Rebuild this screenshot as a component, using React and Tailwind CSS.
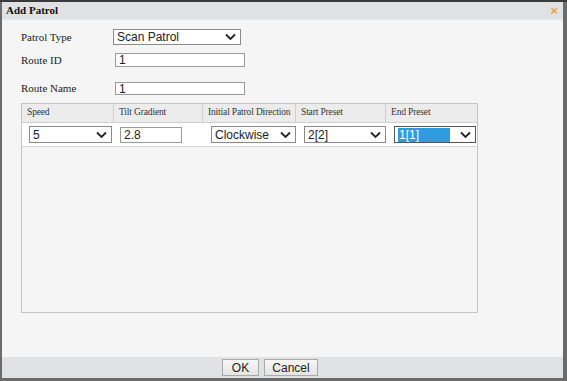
function Chevron() {
  return (
    <svg width="11" height="8" viewBox="0 0 11 8" className="shrink-0">
      <path d="M1 1.5 L5.5 6 L10 1.5" fill="none" stroke="#222" strokeWidth="1.8" />
    </svg>
  );
}

function Select({ value, className = '', selected = false }) {
  return (
    <div className={`flex items-center bg-white border border-[#8a8a8a] pl-[3px] pr-[4px] ${className}`}>
      <span
        className={`flex-1 text-[12px] leading-[14px] font-['Liberation_Sans',Arial,sans-serif] ${
          selected ? 'bg-[#2f9be0] text-white pl-[1px] mr-[10px]' : 'text-[#222]'
        }`}
      >
        {value}
      </span>
      <Chevron />
    </div>
  );
}

function TextBox({ value, className = '' }) {
  return (
    <div className={`flex items-center bg-white border border-[#9a9a9a] pl-[3px] text-[12px] leading-[12px] text-[#222] font-['Liberation_Sans',Arial,sans-serif] ${className}`}>
      {value}
    </div>
  );
}

export default function App() {
  const headers = ['Speed', 'Tilt Gradient', 'Initial Patrol Direction', 'Start Preset', 'End Preset'];

  return (
    <div className="w-[567px] h-[381px] bg-[#6b6b6b] flex flex-col overflow-hidden font-['Liberation_Serif','Times_New_Roman',serif]">
      <div className="h-[2px] bg-[#3a3a3a]" />
      <div className="flex-1 flex flex-col ml-[2px] mr-[4px] mb-[3px] bg-[#f5f5f5]">
        {/* title bar */}
        <div className="h-[18px] flex items-center justify-between bg-[#dfe1e3] pl-[4px] pr-[5px] border-b border-[#e8eaec]">
          <span className="text-[11px] leading-none font-bold text-[#111]">Add Patrol</span>
          <span className="text-[13px] font-bold leading-none text-[#e0a93a] font-['Liberation_Sans',Arial,sans-serif]">×</span>
        </div>

        {/* form */}
        <div className="pl-[19px] pt-[9px]">
          <div className="flex items-center h-[16px]">
            <span className="w-[92px] text-[11px] text-[#222]">Patrol Type</span>
            <Select value="Scan Patrol" className="w-[128px] h-[16px]" />
          </div>
          <div className="flex items-center h-[14px] mt-[8px]">
            <span className="w-[94px] text-[11px] text-[#222]">Route ID</span>
            <TextBox value="1" className="w-[130px] h-[14px]" />
          </div>
          <div className="flex items-center h-[13px] mt-[15px]">
            <span className="w-[94px] text-[11px] text-[#222]">Route Name</span>
            <TextBox value="1" className="w-[130px] h-[13px]" />
          </div>

          {/* table */}
          <div className="mt-[8px] w-[457px] h-[210px] border border-[#c4c4c4] bg-[#f5f5f5]">
            <div className="grid grid-cols-[92px_89px_93px_90px_1fr] h-[19px] bg-[#ececec] border-b border-[#cfcfcf]">
              {headers.map((h, i) => (
                <div
                  key={h}
                  className={`flex items-center pl-[5px] text-[9.5px] tracking-[-0.15px] leading-none whitespace-nowrap overflow-hidden text-[#333] ${i < 4 ? 'border-r border-[#cfcfcf]' : ''}`}
                >
                  {h}
                </div>
              ))}
            </div>
            <div className="grid grid-cols-[92px_89px_93px_90px_1fr] h-[24px] bg-white border-b border-[#d6d6d6] items-center">
              <div className="pl-[7px]"><Select value="5" className="w-[83px] h-[17px]" /></div>
              <div className="pl-[6px]"><TextBox value="2.8" className="w-[62px] h-[16px]" /></div>
              <div className="pl-[8px]"><Select value="Clockwise" className="w-[85px] h-[17px]" /></div>
              <div className="pl-[8px]"><Select value="2[2]" className="w-[82px] h-[17px]" /></div>
              <div className="pl-[8px]"><Select value="1[1]" selected className="w-[82px] h-[17px] border-[#555]" /></div>
            </div>
          </div>
        </div>

        <div className="flex-1" />

        {/* footer */}
        <div className="h-[21px] bg-[#dfe1e3] flex items-start gap-[5px] pt-[2px] pl-[220px]">
          <button className="w-[37px] h-[17px] border border-[#a9a9a9] bg-gradient-to-b from-[#f7f7f7] to-[#e4e4e4] text-[12px] leading-none text-[#222] font-['Liberation_Sans',Arial,sans-serif]">
            OK
          </button>
          <button className="w-[54px] h-[17px] border border-[#a9a9a9] bg-gradient-to-b from-[#f7f7f7] to-[#e4e4e4] text-[12px] leading-none text-[#222] font-['Liberation_Sans',Arial,sans-serif]">
            Cancel
          </button>
        </div>
      </div>
    </div>
  );
}
